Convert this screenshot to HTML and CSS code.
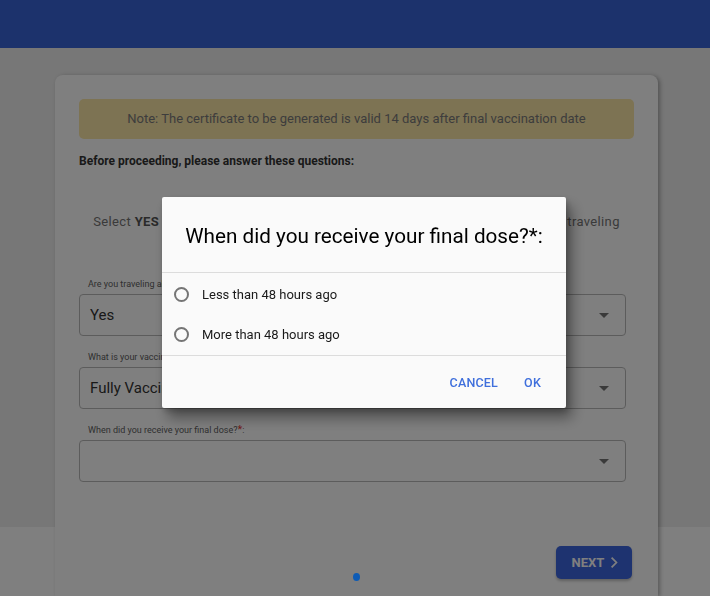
FILE: index.html
```html
<!DOCTYPE html>
<html lang="en">
<head>
<meta charset="utf-8">
<title>Vaccination certificate</title>
<link rel="stylesheet" href="styles.css">
</head>
<body>
<header class="topbar"></header>
<main class="page">
  <section class="card">
    <div class="note">Note: The certificate to be generated is valid 14 days after final vaccination date</div>
    <p class="intro">Before proceeding, please answer these questions:</p>
    <p class="hint">Select <b>YES</b> if your destination requires proof of vaccination for those who are traveling</p>

    <div class="field field-first">
      <label class="label">Are you traveling abroad?*:</label>
      <div class="select"><span class="value">Yes</span><span class="caret"></span></div>
    </div>
    <div class="field">
      <label class="label">What is your vaccination status?*:</label>
      <div class="select"><span class="value">Fully Vaccinated</span><span class="caret"></span></div>
    </div>
    <div class="field">
      <label class="label">When did you receive your final dose?<span class="req">*</span>:</label>
      <div class="select"><span class="value"></span><span class="caret"></span></div>
    </div>

    <div class="actions">
      <button class="next" type="button">NEXT
        <svg class="chev" viewBox="0 0 10 16" width="8" height="13"><path d="M2 2l6 6-6 6" fill="none" stroke="currentColor" stroke-width="2.2"/></svg>
      </button>
    </div>
    <div class="stepper"><span class="dot"></span></div>
  </section>
</main>

<div class="scrim"></div>

<div class="dialog" role="dialog">
  <h2 class="dialog-title">When did you receive your final dose?*:</h2>
  <div class="options">
    <label class="option"><span class="radio"></span><span>Less than 48 hours ago</span></label>
    <label class="option"><span class="radio"></span><span>More than 48 hours ago</span></label>
  </div>
  <div class="dialog-actions">
    <button class="text-btn" type="button">CANCEL</button>
    <button class="text-btn" type="button">OK</button>
  </div>
</div>
</body>
</html>
```

FILE: styles.css
```css
* { box-sizing: border-box; }

html, body {
  margin: 0;
  padding: 0;
  height: 100%;
  overflow: hidden;
}

body {
  font-family: Roboto, "Noto Sans", "Liberation Sans", sans-serif;
  background: #ffffff;
  color: #333;
}

.topbar {
  height: 48px;
  background: #3864d8;
}

.page {
  background: linear-gradient(to bottom, #eeeeee 0, #eeeeee 479px, #ffffff 479px);
  padding-top: 27px;
  padding-left: 55px;
  height: 548px;
}

.card {
  width: 603px;
  height: 521px;
  background: #ffffff;
  border-radius: 8px 8px 0 0;
  box-shadow: 2px 1px 4px rgba(0, 0, 0, 0.3);
  padding: 24px 24px 0 24px;
}

.note {
  height: 40px;
  line-height: 40px;
  background: #fae6a6;
  border-radius: 5px;
  text-align: center;
  font-size: 13px;
  color: #7a7a7a;
}

.intro {
  margin: 14px 0 0;
  font-size: 12px;
  line-height: 16px;
  font-weight: 700;
  color: #333;
}

.hint {
  margin: 44px 0 0;
  font-size: 13px;
  line-height: 18px;
  letter-spacing: 0.36px;
  text-align: center;
  color: #757575;
  white-space: nowrap;
}

.hint b { font-weight: 700; color: #555; }

.field { margin-right: 8px; }
.field-first { margin-top: 47px; }
.field + .field { margin-top: 15px; }

.label {
  display: block;
  padding-left: 9px;
  font-size: 9px;
  line-height: 12px;
  color: #5e5e5e;
  margin-bottom: 4px;
}

.req { color: #e53935; font-size: 11px; }

.select {
  height: 42px;
  border: 1px solid #b9b9b9;
  border-radius: 4px;
  display: flex;
  align-items: center;
  justify-content: space-between;
  padding: 0 16px 0 10px;
}

.value {
  font-size: 15px;
  color: #333;
}

.caret {
  width: 0;
  height: 0;
  border-left: 5px solid transparent;
  border-right: 5px solid transparent;
  border-top: 5px solid #757575;
}

.actions {
  display: flex;
  justify-content: flex-end;
  margin-top: 64px;
  margin-right: 2px;
}

.next {
  width: 76px;
  height: 33px;
  border: 0;
  border-radius: 5px;
  background: #3c66e0;
  color: #ffffff;
  font-family: inherit;
  font-size: 13px;
  font-weight: 700;
  display: flex;
  align-items: center;
  justify-content: center;
  gap: 6px;
  padding: 0 0 0 2px;
  box-shadow: 0 2px 3px rgba(0, 0, 0, 0.25);
}

.chev { display: block; }

.stepper {
  display: flex;
  justify-content: center;
  margin-top: -6px;
}

.dot {
  position: relative;
  z-index: 2;
  width: 7px;
  height: 8px;
  border-radius: 50%;
  background: #0d5bb5;
}

.scrim {
  position: fixed;
  inset: 0;
  z-index: 1;
  background: rgba(0, 0, 0, 0.5);
}

.dialog {
  position: fixed;
  z-index: 3;
  left: 162px;
  top: 197px;
  width: 404px;
  height: 211px;
  background: #fafafa;
  border-radius: 2px;
  box-shadow: 6px 10px 14px rgba(0, 0, 0, 0.38), 2px 3px 6px rgba(0, 0, 0, 0.2);
  display: flex;
  flex-direction: column;
}

.dialog-title {
  margin: 0;
  height: 76px;
  padding-top: 27px;
  font-size: 20.7px;
  line-height: 24px;
  font-weight: 400;
  color: #000;
  text-align: center;
  border-bottom: 1px solid #dcdcdc;
}

.options {
  height: 83px;
  padding-top: 1px;
  border-bottom: 1px solid #dcdcdc;
}

.option {
  height: 40px;
  display: flex;
  align-items: center;
  padding-left: 12px;
  gap: 13px;
  font-size: 13px;
  color: #1a1a1a;
}

.radio {
  width: 15px;
  height: 15px;
  border: 2px solid #757575;
  border-radius: 50%;
}

.dialog-actions {
  flex: 1;
  display: flex;
  justify-content: flex-end;
  align-items: center;
  gap: 10px;
  padding-right: 17px;
}

.text-btn {
  border: 0;
  background: none;
  font-family: inherit;
  font-size: 12.5px;
  font-weight: 500;
  letter-spacing: 0.2px;
  color: #3f6fdc;
  padding: 8px;
}
```
